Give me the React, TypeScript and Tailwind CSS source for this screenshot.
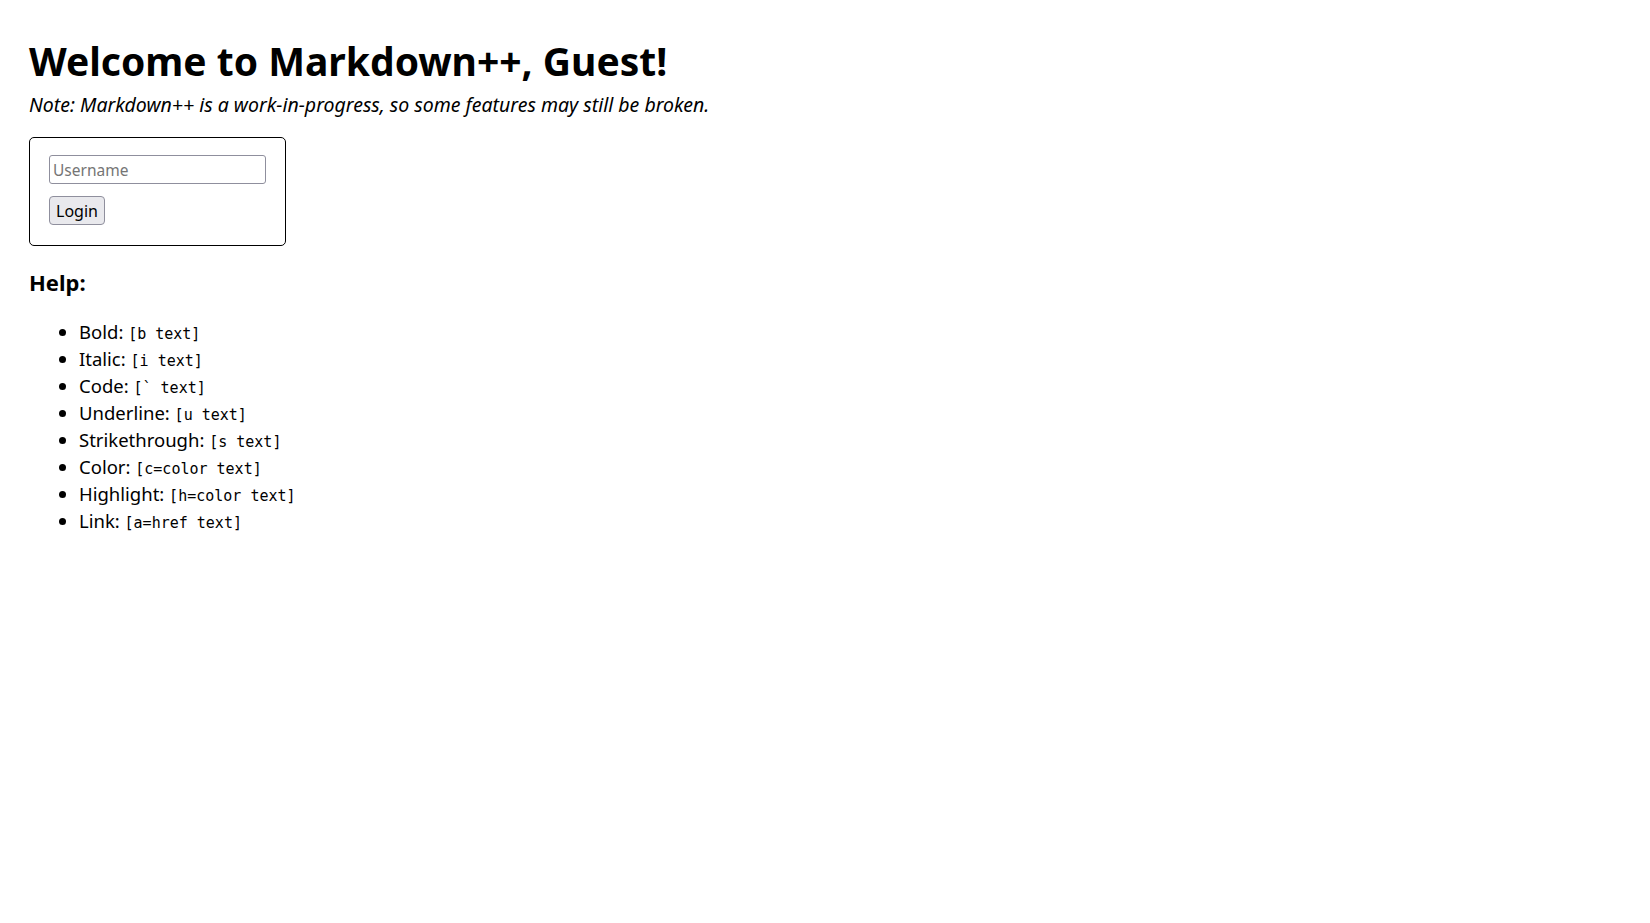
import React from "react";

const help = [
  ["Bold", "[b text]"],
  ["Italic", "[i text]"],
  ["Code", "[` text]"],
  ["Underline", "[u text]"],
  ["Strikethrough", "[s text]"],
  ["Color", "[c=color text]"],
  ["Highlight", "[h=color text]"],
  ["Link", "[a=href text]"],
];

export default function App() {
  return (
    <div className="min-h-screen bg-white text-black px-[29px] pt-[35px] text-[19.5px] font-['Noto_Sans',sans-serif]">
      <h1 className="text-[39px] font-bold leading-[52px]">Welcome to Markdown++, Guest!</h1>
      <p className="mt-[4px] italic leading-[27px]">
        Note: Markdown++ is a work-in-progress, so some features may still be broken.
      </p>

      <div className="mt-[19px] w-[257px] rounded-[5px] border border-black px-[19px] pt-[17px] pb-[20px]">
        <input
          placeholder="Username"
          className="block h-[29px] w-[217px] rounded-[3px] border border-[#8f8f9d] px-[3px] text-[15.5px] outline-none placeholder:text-[#757575]"
        />
        <button className="mt-[12px] block h-[29px] rounded-[4px] border border-[#8f8f9d] bg-[#e9e9ed] px-[6px] text-[16px]">
          Login
        </button>
      </div>

      <h3 className="mt-[21px] text-[22px] font-bold leading-[30px]">Help:</h3>
      <ul className="mt-[21px] list-disc pl-[50px] text-[18.5px] leading-[27px]">
        {help.map(([k, v]) => (
          <li key={k}>
            {k}: <code className="font-['DejaVu_Sans_Mono',monospace] text-[15px] leading-none">{v}</code>
          </li>
        ))}
      </ul>
    </div>
  );
}
